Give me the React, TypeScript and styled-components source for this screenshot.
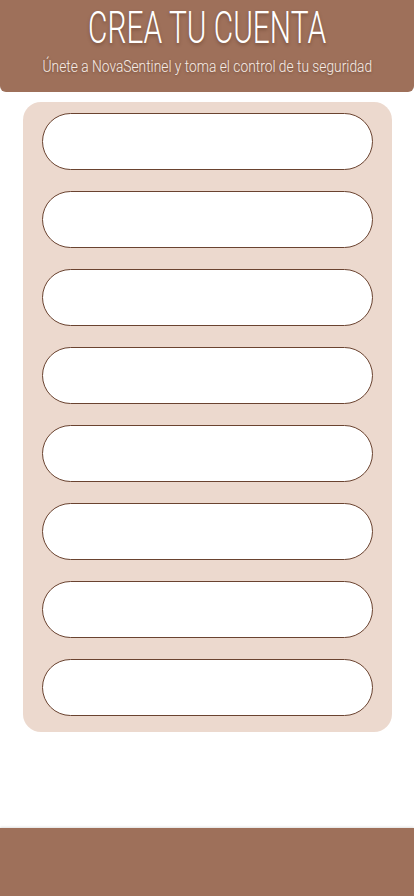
import React from "react";
import styled, { createGlobalStyle } from "styled-components";

const Global = createGlobalStyle`
  html, body { margin: 0; padding: 0; background: #ffffff; }
  * { box-sizing: border-box; }
`;

const Page = styled.div`
  min-height: 100vh;
  display: flex;
  flex-direction: column;
  font-family: Roboto, "DejaVu Sans", sans-serif;
`;

const Header = styled.header`
  height: 92px;
  background: #9e705a;
  border-radius: 0 0 6px 6px;
  display: flex;
  flex-direction: column;
  align-items: center;
  padding-top: 3px;
  color: #ffffff;
`;

const Title = styled.h1`
  margin: 0;
  font-family: Roboto, sans-serif;
  font-weight: 300;
  font-size: 44px;
  line-height: 50px;
  text-shadow: 0 2px 4px rgba(60, 30, 15, 0.35);
  transform: scaleX(0.68);
  white-space: nowrap;
`;

const Subtitle = styled.p`
  margin: 4px 0 0;
  font-family: Roboto, sans-serif;
  font-weight: 300;
  font-size: 16.5px;
  line-height: 20px;
  color: #f6ece6;
  text-shadow: 0 1px 3px rgba(60, 30, 15, 0.4);
  transform: scaleX(0.835);
  white-space: nowrap;
`;

const Card = styled.form`
  margin: 10px 22px 0 23px;
  background: #ecd9ce;
  border-radius: 18px;
  padding: 11px 19px 16px 19px;
  display: flex;
  flex-direction: column;
  gap: 21px;
`;

const Field = styled.input`
  display: block;
  width: 100%;
  height: 57px;
  border-radius: 29px;
  border: 1px solid #6a4330;
  background: #ffffff;
  outline: none;
  padding: 0 24px;
  font-size: 16px;
`;

const Footer = styled.footer`
  margin-top: auto;
  height: 68px;
  background: #9e705a;
  box-shadow: 0 -1px 2px rgba(0, 0, 0, 0.12);
`;

export default function App() {
  const fields = ["nombre", "apellido", "email", "telefono", "usuario", "password", "confirmar", "fecha"];
  return (
    <>
      <Global />
      <Page>
        <Header>
          <Title>CREA TU CUENTA</Title>
          <Subtitle>Únete a NovaSentinel y toma el control de tu seguridad</Subtitle>
        </Header>
        <Card onSubmit={(e) => e.preventDefault()}>
          {fields.map((f) => (
            <Field key={f} name={f} aria-label={f} />
          ))}
        </Card>
        <Footer />
      </Page>
    </>
  );
}
